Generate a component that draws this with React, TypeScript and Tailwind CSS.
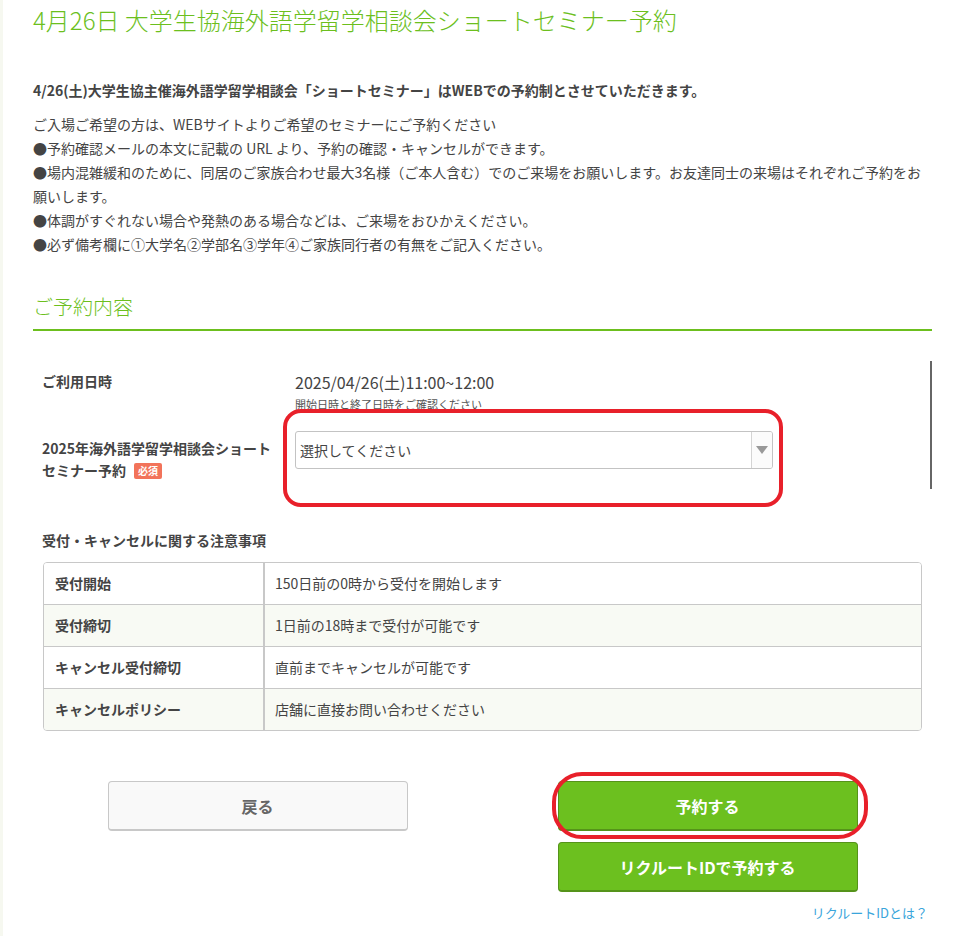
const notes = [
  { label: '受付開始', text: '150日前の0時から受付を開始します' },
  { label: '受付締切', text: '1日前の18時まで受付が可能です' },
  { label: 'キャンセル受付締切', text: '直前までキャンセルが可能です' },
  { label: 'キャンセルポリシー', text: '店舗に直接お問い合わせください' },
];

export default function App() {
  return (
    <div className="min-h-[936px] border-l-[3px] border-[#f6f8f0] bg-white pl-[30px] font-['Noto_Sans_CJK_JP',sans-serif] text-[#444]">
      <div className="w-[899px]">
        <h1 className="pt-[3px] text-[24px] font-light leading-[34px] text-[#6cbf1e]">
          4月26日 大学生協海外語学留学相談会ショートセミナー予約
        </h1>

        <p className="mt-[41px] text-[14px] font-bold leading-[24px]">
          4/26(土)大学生協主催海外語学留学相談会「ショートセミナー」はWEBでの予約制とさせていただきます。
        </p>
        <div className="mt-[10px] text-[14px] leading-[24px]">
          <p>ご入場ご希望の方は、WEBサイトよりご希望のセミナーにご予約ください</p>
          <p>●予約確認メールの本文に記載の URL より、予約の確認・キャンセルができます。</p>
          <p>
            ●場内混雑緩和のために、同居のご家族合わせ最大3名様（ご本人含む）でのご来場をお願いします。お友達同士の来場はそれぞれご予約をお
            <br />
            願いします。
          </p>
          <p>●体調がすぐれない場合や発熱のある場合などは、ご来場をおひかえください。</p>
          <p>●必ず備考欄に①大学名②学部名③学年④ご家族同行者の有無をご記入ください。</p>
        </div>

        <h2 className="mt-[36px] border-b-2 border-[#6cbf1e] pb-[7px] text-[20px] font-light leading-[30px] text-[#6cbf1e]">
          ご予約内容
        </h2>

        {/* form */}
        <div className="mt-[30px] h-[128px] border-r-2 border-[#666] pl-[9px]">
          <div className="grid grid-cols-[253px_1fr] pt-[10px]">
            <div className="text-[14px] font-bold leading-[20px]">ご利用日時</div>
            <div>
              <div className="text-[16px] leading-[22px]">2025/04/26(土)11:00~12:00</div>
              <div className="mt-[4px] text-[11px] leading-[14px] text-[#555]">開始日時と終了日時をご確認ください</div>
            </div>
          </div>
          <div className="mt-[20px] grid grid-cols-[253px_1fr]">
            <div className="pt-[6px] text-[14px] font-bold leading-[22px]">
              2025年海外語学留学相談会ショート
              <br />
              セミナー予約
              <span className="ml-[8px] inline-flex h-[16px] w-[28px] translate-y-[-1px] items-center justify-center rounded-[2px] bg-[#f2735a] align-middle text-[10px] font-bold leading-none text-white">
                必須
              </span>
            </div>
            <div className="relative w-[478px]">
              <div className="flex h-[38px] overflow-hidden rounded-[3px] border border-[#c3c3c3] bg-white">
                <div className="flex flex-1 items-center pl-[4px] text-[14px]">選択してください</div>
                <div className="flex w-[21px] items-center justify-center border-l border-[#d4d4d4] bg-[#fbfbfb]">
                  <div className="h-0 w-0 border-x-[6px] border-t-[8px] border-x-transparent border-t-[#999]" />
                </div>
              </div>
              <div className="pointer-events-none absolute -bottom-[26px] -left-[12px] -right-[10px] -top-[22px] rounded-[18px] border-4 border-[#e8202a]" />
            </div>
          </div>
        </div>

        {/* notes */}
        <div className="mt-[41px] pl-[9px] text-[14px] font-bold leading-[20px]">受付・キャンセルに関する注意事項</div>
        <div className="ml-[10px] mt-[12px] w-[879px] overflow-hidden rounded-[4px] border border-[#c8c8c8] text-[14px]">
          {notes.map((n, i) => (
            <div
              key={n.label}
              className={`flex h-[41px] ${i > 0 ? 'h-[42px] border-t border-[#c8c8c8]' : ''} ${i % 2 === 1 ? 'bg-[#f8faf4]' : 'bg-white'}`}
            >
              <div className="flex w-[221px] items-center border-r-2 border-[#c8c8c8] pl-[11px] font-bold">{n.label}</div>
              <div className="flex flex-1 items-center pl-[10px]">{n.text}</div>
            </div>
          ))}
        </div>

        {/* buttons */}
        <div className="mt-[50px] flex items-start justify-center gap-[150px]">
          <button className="h-[50px] w-[300px] rounded-[4px] border border-b-2 border-[#c8c8c8] bg-[#f9f9f9] text-[16px] font-bold text-[#666]">
            戻る
          </button>
          <div className="flex flex-col gap-[11px]">
            <div className="relative">
              <button className="h-[50px] w-[300px] rounded-[4px] border border-b-2 border-[#55931a] bg-[#6cc01f] text-[16px] font-bold text-white">
                予約する
              </button>
              <div className="pointer-events-none absolute -bottom-[8px] -left-[6px] -right-[10px] -top-[9px] rounded-[30px] border-4 border-[#e8202a]" />
            </div>
            <button className="h-[50px] w-[300px] rounded-[4px] border border-b-2 border-[#55931a] bg-[#6cc01f] text-[16px] font-bold text-white">
              リクルートIDで予約する
            </button>
          </div>
        </div>
        <div className="mt-[11px] pr-[4px] text-right text-[13px] leading-[20px] text-[#3aa5db]">リクルートIDとは？</div>
      </div>
    </div>
  );
}
